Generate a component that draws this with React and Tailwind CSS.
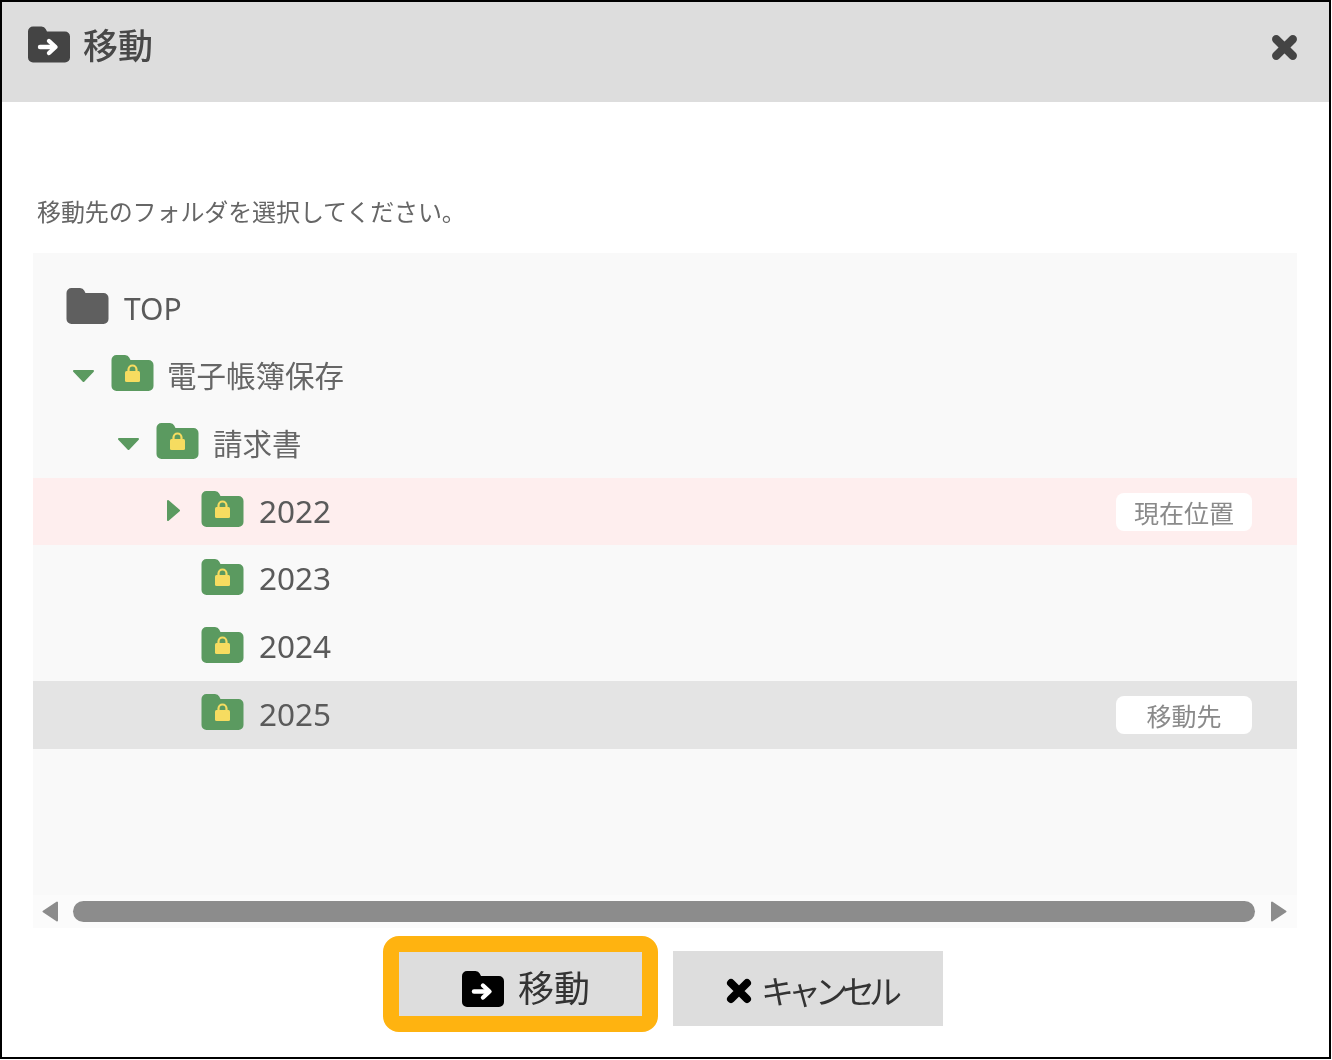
import React from "react";

const FONT = "font-['Noto_Sans','Noto_Sans_CJK_JP',sans-serif]";
const FOLDER = "M5 0H13.5q3 0 4.2 2.5L19 5H37a5 5 0 0 1 5 5V31a5 5 0 0 1-5 5H5a5 5 0 0 1-5-5V5a5 5 0 0 1 5-5z";

function MoveFolder({ className, fill }) {
  return (
    <svg viewBox="0 0 42 36" className={className}>
      <path d={FOLDER} fill={fill} />
      <path d="M12 20.5H25" stroke="#fff" strokeWidth="4.4" fill="none" strokeLinecap="round" />
      <path d="M21 14.5L27.5 20.5L21 26.5" stroke="#fff" strokeWidth="4.4" fill="none" strokeLinecap="round" strokeLinejoin="round" />
    </svg>
  );
}

function Cross({ className }) {
  return (
    <svg viewBox="0 0 26 26" className={className}>
      <path d="M5 5L21 21M21 5L5 21" stroke="currentColor" strokeWidth="8" strokeLinecap="round" fill="none" />
    </svg>
  );
}

function Folder({ locked }) {
  return (
    <svg viewBox="0 0 42 36" className="w-[43px] h-[36px] shrink-0">
      <path d={FOLDER} fill={locked ? "#5b9a60" : "#5f5f5f"} />
      {locked && (
        <>
          <rect x="13.5" y="16" width="15" height="11" rx="1.5" fill="#f6dc60" />
          <path d="M17 17V14.5a4 4 0 0 1 8 0V17" stroke="#f6dc60" strokeWidth="2.2" fill="none" />
        </>
      )}
    </svg>
  );
}

function Caret({ dir }) {
  if (dir === "down")
    return (
      <svg viewBox="0 0 21 12" className="w-[21px] h-[12px]">
        <path d="M1 1H20L10.5 11z" fill="#5b9a60" stroke="#5b9a60" strokeWidth="2" strokeLinejoin="round" />
      </svg>
    );
  return (
    <svg viewBox="0 0 13 21" className="ml-[4px] mb-[2px] w-[13px] h-[21px]">
      <path d="M1 1L12 10.5L1 20z" fill="#5b9a60" stroke="#5b9a60" strokeWidth="2" strokeLinejoin="round" />
    </svg>
  );
}

const rows = [
  { label: "TOP", pad: "pl-[33px]", bg: "", locked: false, size: "ml-[15px] mt-[2px] text-[30px] text-[#5a5a5a]" },
  { label: "電子帳簿保存", pad: "pl-[40px]", bg: "", locked: true, caret: "down", size: "ml-[13px] text-[29.5px] text-[#666666]" },
  { label: "請求書", pad: "pl-[85px]", bg: "", locked: true, caret: "down", size: "ml-[14px] text-[29.5px] text-[#666666]" },
  { label: "2022", pad: "pl-[130px]", bg: "bg-[#feeeee]", locked: true, caret: "right", spacer: true, badge: "現在位置", size: "ml-[15px] mb-[2px] text-[31.5px] text-[#5a5a5a]" },
  { label: "2023", pad: "pl-[130px]", bg: "", locked: true, spacer: true, size: "ml-[15px] mb-[3px] text-[31.5px] text-[#5a5a5a]" },
  { label: "2024", pad: "pl-[130px]", bg: "", locked: true, spacer: true, size: "ml-[15px] mb-[2px] text-[31.5px] text-[#5a5a5a]" },
  { label: "2025", pad: "pl-[130px]", bg: "bg-[#e4e4e4]", locked: true, spacer: true, badge: "移動先", size: "ml-[15px] mb-[3px] text-[31.5px] text-[#5a5a5a]" },
];

function Row({ r }) {
  return (
    <div className={`flex items-center h-[67.8px] pr-[45px] ${r.pad} ${r.bg}`}>
      {(r.caret || r.spacer) && (
        <div className="w-[38px] shrink-0 flex items-center">{r.caret && <Caret dir={r.caret} />}</div>
      )}
      <div className="mb-[5px] flex">
        <Folder locked={r.locked} />
      </div>
      <span className={`leading-none ${r.size}`}>{r.label}</span>
      {r.badge && (
        <span className="ml-auto w-[136px] h-[38px] rounded-[8px] bg-white flex items-center justify-center pt-[3px] text-[25px] leading-none text-[#8a8a8a]">
          {r.badge}
        </span>
      )}
    </div>
  );
}

export default function App() {
  return (
    <div className={`w-[1331px] h-[1059px] border-2 border-black bg-white flex flex-col blur-[0.5px] ${FONT}`}>
      <header className="h-[100px] shrink-0 bg-[#dddddd] flex items-center pl-[26px] pr-[32px]">
        <MoveFolder className="w-[42px] h-[37px] mb-[16px]" fill="#444444" />
        <h1 className="ml-[13px] mb-[14px] text-[35px] leading-none font-medium text-[#484848]">移動</h1>
        <Cross className="ml-auto mb-[10px] text-[#444444] w-[27px] h-[27px] -mr-[1px]" />
      </header>

      <p className="mt-[94px] ml-[35px] h-[32px] text-[24px] leading-[32px] tracking-[-0.1px] text-[#666666]">
        移動先のフォルダを選択してください。
      </p>

      <section className="mt-[25px] ml-[31px] w-[1264px] bg-[#f9f9f9] flex flex-col">
        <div className="h-[642px] pt-[21.3px]">
          {rows.map((r) => (
            <Row key={r.label} r={r} />
          ))}
        </div>
        <div className="h-[33px] bg-[#fbfbfb] flex items-center px-[9px]">
          <svg viewBox="0 0 16 21" className="w-[16px] h-[21px] shrink-0">
            <path d="M15 1.5V19.5L1.5 10.5z" fill="#8c8c8c" stroke="#8c8c8c" strokeWidth="2" strokeLinejoin="round" />
          </svg>
          <div className="ml-[15px] h-[21px] w-[1182px] rounded-full bg-[#8c8c8c]" />
          <svg viewBox="0 0 16 21" className="ml-[16px] w-[16px] h-[21px] shrink-0">
            <path d="M1 1.5V19.5L14.5 10.5z" fill="#8c8c8c" stroke="#8c8c8c" strokeWidth="2" strokeLinejoin="round" />
          </svg>
        </div>
      </section>

      <div className="mt-[8px] ml-[381px] flex items-start">
        <button className="w-[275px] h-[96px] border-[16px] border-[#ffb310] rounded-[16px] bg-[#dddddd] flex items-center justify-center pl-[11px] pt-[10px]">
          <MoveFolder className="w-[42px] h-[36px]" fill="#000000" />
          <span className="ml-[14px] text-[36px] leading-none text-[#333333]">移動</span>
        </button>
        <button className="mt-[15px] ml-[15px] w-[270px] h-[75px] bg-[#dddddd] flex items-center justify-center pt-[5px] pl-[6px]">
          <Cross className="w-[26px] h-[26px] text-black" />
          <span className="ml-[9px] text-[33px] leading-none tracking-[-6px] text-[#333333]">キャンセル</span>
        </button>
      </div>
    </div>
  );
}
